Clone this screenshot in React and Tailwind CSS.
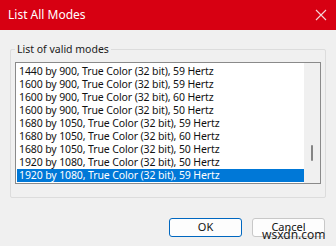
import React from "react";

const rows = [
  "1440 by 900, True Color (32 bit), 59 Hertz",
  "1600 by 900, True Color (32 bit), 59 Hertz",
  "1600 by 900, True Color (32 bit), 60 Hertz",
  "1600 by 900, True Color (32 bit), 50 Hertz",
  "1680 by 1050, True Color (32 bit), 59 Hertz",
  "1680 by 1050, True Color (32 bit), 60 Hertz",
  "1680 by 1050, True Color (32 bit), 50 Hertz",
  "1920 by 1080, True Color (32 bit), 50 Hertz",
  "1920 by 1080, True Color (32 bit), 59 Hertz",
];

export default function App() {
  return (
    <div
      className="w-[336px] h-[246px] bg-[#f0f0f0] flex flex-col overflow-hidden relative"
      style={{ fontFamily: '"Noto Sans", "Open Sans", sans-serif' }}
    >
      <div className="h-[30px] bg-[#d70012] flex items-center justify-between pl-[8px] pr-[8px] shrink-0">
        <span className="text-white text-[12px] leading-none">List All Modes</span>
        <svg width="12" height="12" viewBox="0 0 12 12" className="mr-[1px]">
          <path d="M1 1 L11 11 M11 1 L1 11" stroke="#f4d6d8" strokeWidth="1.1" />
        </svg>
      </div>
      <div className="relative mx-[10px] mt-[19px] h-[149px] border border-[#dcdcdc] rounded-[2px]">
        <span className="absolute left-[4px] top-[-9px] bg-[#f0f0f0] px-[2px] text-[10.5px] leading-[16px] text-[#1a1a1a]">
          List of valid modes
        </span>
        <div className="mt-[12px] mx-[4px] h-[122px] border border-[#8a8a8a] bg-white flex">
          <div className="flex-1 pt-[2px] pl-[1px]">
            {rows.map((r, i) => (
              <div
                key={i}
                className={
                  "h-[13px] leading-[13px] text-[10.5px] tracking-[-0.12px] pl-[2px] whitespace-nowrap " +
                  (i === rows.length - 1 ? "bg-[#0078d7] text-white" : "text-[#111]")
                }
              >
                {r}
              </div>
            ))}
          </div>
          <div className="w-[16px] bg-[#f0f0f0] flex justify-center">
            <div className="w-[2px] h-[16px] bg-[#858585] mt-[82px] rounded-full" />
          </div>
        </div>
      </div>
      <div className="flex justify-end gap-[10px] pr-[11px] mt-[20px]">
        <div className="w-[73px] h-[19px] border border-[#0067c0] rounded-[3px] bg-[#fdfdfd] flex items-center justify-center text-[11px] text-[#111]">
          OK
        </div>
        <div className="w-[73px] h-[19px] border border-[#c8c8c8] rounded-[3px] bg-[#fdfdfd] flex items-center justify-center text-[11px] text-[#111]">
          Cancel
        </div>
      </div>
      <span className="absolute left-[262px] top-[229px] text-[12px] leading-none text-[#222]">wsxdn.com</span>
    </div>
  );
}
